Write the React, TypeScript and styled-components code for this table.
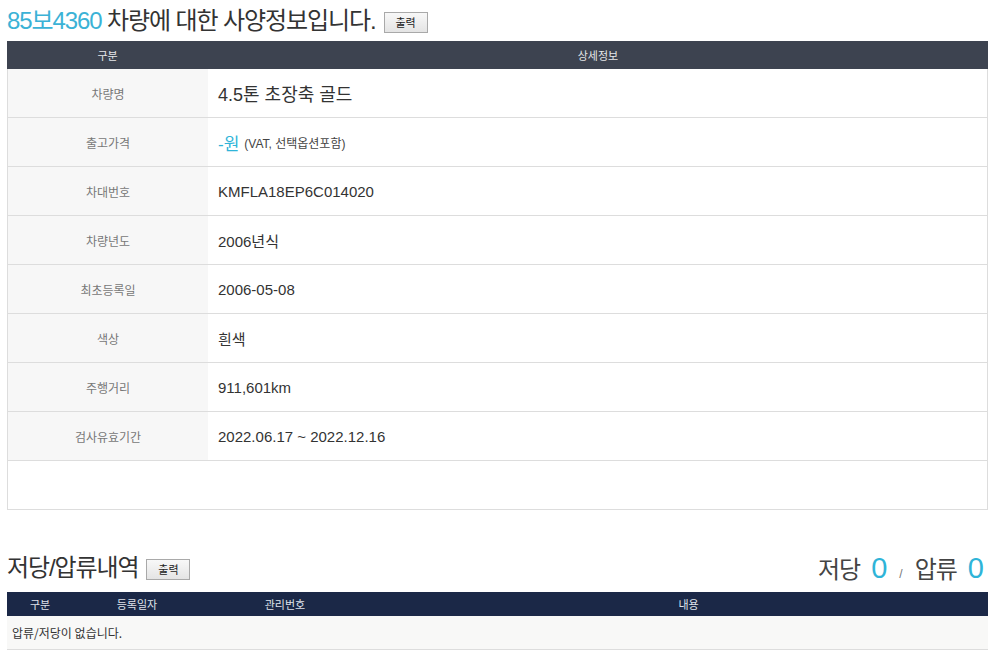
import React from "react";
import styled, { createGlobalStyle } from "styled-components";

const GlobalStyle = createGlobalStyle`
    body {
        margin: 0;
        background: #fff;
        font-family: "Liberation Sans", "Noto Sans CJK KR", sans-serif;
        color: #333;
    }
`;

const Page = styled.div`
    width: 981px;
    padding: 0 7px;
`;

const TitleRow = styled.div<{ $h: number }>`
    display: flex;
    align-items: center;
    justify-content: space-between;
    height: ${(p) => p.$h}px;
`;

const TitleLeft = styled.div`
    display: flex;
    align-items: flex-end;
    gap: 8px;
`;

const Title = styled.h2`
    margin: 0;
    font-size: 24px;
    font-weight: normal;
    letter-spacing: -1.1px;
    color: #333;
    line-height: 30px;

    .plate {
        color: #3bb2d6;
    }
`;

const PrintButton = styled.button`
    width: 44px;
    height: 21px;
    padding: 0;
    margin-bottom: 3px;
    border: 1px solid #a9a9a9;
    border-radius: 0;
    background: linear-gradient(#f8f8f8, #e4e4e4);
    font-family: "Noto Sans CJK KR", sans-serif;
    font-size: 11px;
    color: #222;
`;

const Spacer = styled.div<{ $h: number }>`
    height: ${(p) => p.$h}px;
`;

const SpecTable = styled.div`
    border: 1px solid #ddd;
    border-top: none;
    padding-bottom: 48px;
`;

const SpecHead = styled.div`
    display: grid;
    grid-template-columns: 201px 1fr;
    height: 28px;
    margin: 0 -1px;
    background: #3d4350;
    color: #e6e7ea;
    font-size: 11px;
    font-family: "Noto Sans CJK KR", sans-serif;

    span {
        display: flex;
        align-items: center;
        justify-content: center;
    }
`;

const SpecRow = styled.div`
    display: grid;
    grid-template-columns: 200px 1fr;
    height: 48px;
    border-bottom: 1px solid #ddd;
`;

const Label = styled.div`
    display: flex;
    align-items: center;
    justify-content: center;
    background: #f7f7f7;
    color: #777;
    font-size: 12px;
    font-family: "Noto Sans CJK KR", sans-serif;
`;

const Value = styled.div<{ $big?: boolean }>`
    display: flex;
    align-items: center;
    padding-left: 10px;
    font-size: ${(p) => (p.$big ? "18px" : "15px")};
    color: #333;

    .price {
        color: #2fb4d8;
        font-size: 17px;
        margin-right: 5px;
    }

    small {
        font-size: 12px;
        color: #444;
    }
`;

const Counts = styled.div`
    display: flex;
    align-items: baseline;
    font-size: 24px;
    letter-spacing: -1px;
    color: #444;
    padding-right: 5px;

    b {
        font-weight: normal;
        font-size: 29px;
        color: #2fb4d8;
        margin-left: 11px;
    }

    i {
        font-style: normal;
        font-size: 12px;
        color: #777;
        margin: 0 13px;
    }
`;

const LienTable = styled.div`
    border-bottom: 1px solid #ddd;
`;

const LienHead = styled.div`
    display: grid;
    grid-template-columns: 66px 128px 168px 1fr;
    height: 24px;
    background: #1b2847;
    color: #dfe2ea;
    font-size: 11px;
    font-family: "Noto Sans CJK KR", sans-serif;

    span {
        display: flex;
        align-items: center;
        justify-content: center;
    }

    span:last-child {
        padding-left: 20px;
    }
`;

const EmptyRow = styled.div`
    display: flex;
    align-items: center;
    height: 33px;
    padding-left: 5px;
    background: #f8f8f7;
    font-size: 12px;
    color: #333;
    font-family: "Noto Sans CJK KR", sans-serif;
`;

const specs: [string, React.ReactNode, boolean?][] = [
    ["차량명", "4.5톤 초장축 골드", true],
    [
        "출고가격",
        <>
            <span className="price">-원</span>
            <small>(VAT, 선택옵션포함)</small>
        </>,
    ],
    ["차대번호", "KMFLA18EP6C014020"],
    ["차량년도", "2006년식"],
    ["최초등록일", "2006-05-08"],
    ["색상", "흰색"],
    ["주행거리", "911,601km"],
    ["검사유효기간", "2022.06.17 ~ 2022.12.16"],
];

const App = () => {
    return (
        <Page>
            <GlobalStyle />
            <TitleRow $h={41}>
                <TitleLeft>
                    <Title>
                        <span className="plate">85보4360</span> 차량에 대한 사양정보입니다.
                    </Title>
                    <PrintButton>출력</PrintButton>
                </TitleLeft>
            </TitleRow>

            <SpecTable>
                <SpecHead>
                    <span>구분</span>
                    <span>상세정보</span>
                </SpecHead>
                {specs.map(([label, value, big]) => (
                    <SpecRow key={label}>
                        <Label>{label}</Label>
                        <Value $big={big}>{value}</Value>
                    </SpecRow>
                ))}
            </SpecTable>

            <Spacer $h={33} />

            <TitleRow $h={49}>
                <TitleLeft>
                    <Title>저당/압류내역</Title>
                    <PrintButton>출력</PrintButton>
                </TitleLeft>
                <Counts>
                    저당<b>0</b>
                    <i>/</i>
                    압류<b>0</b>
                </Counts>
            </TitleRow>

            <LienTable>
                <LienHead>
                    <span>구분</span>
                    <span>등록일자</span>
                    <span>관리번호</span>
                    <span>내용</span>
                </LienHead>
                <EmptyRow>압류/저당이 없습니다.</EmptyRow>
            </LienTable>
        </Page>
    );
};

export default App;
